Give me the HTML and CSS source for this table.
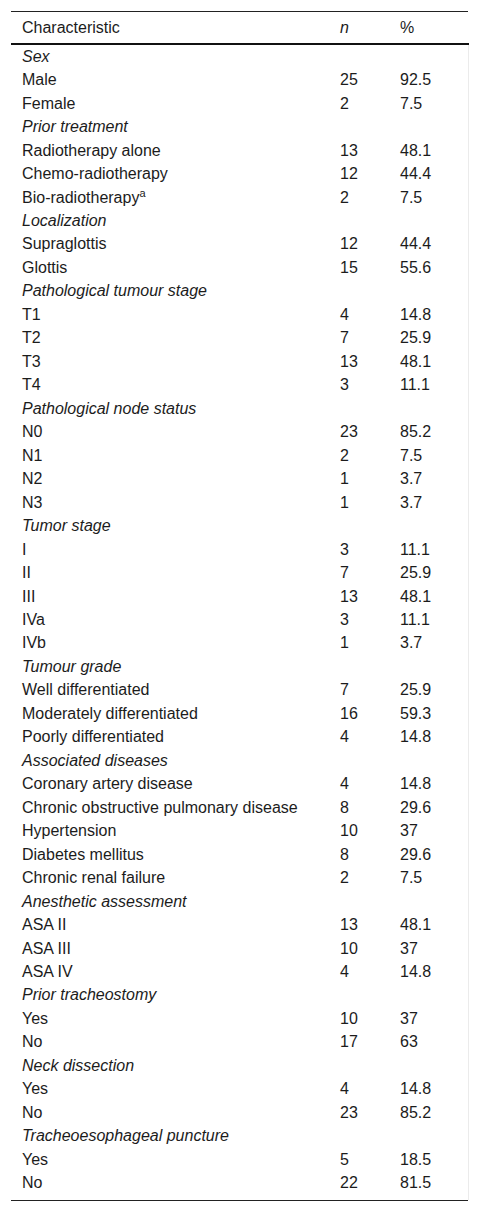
FILE: index.html
```html
<!DOCTYPE html>
<html>
<head>
<meta charset="utf-8">
<link rel="stylesheet" href="styles.css">
</head>
<body>
<div class="card">
<table class="tbl">
<colgroup><col class="c1"><col class="c2"><col class="c3"></colgroup>
<thead>
<tr><th>Characteristic</th><th><i>n</i></th><th>%</th></tr>
</thead>
<tbody>
<tr class="sec"><td colspan="3">Sex</td></tr>
<tr><td>Male</td><td>25</td><td>92.5</td></tr>
<tr><td>Female</td><td>2</td><td>7.5</td></tr>
<tr class="sec"><td colspan="3">Prior treatment</td></tr>
<tr><td>Radiotherapy alone</td><td>13</td><td>48.1</td></tr>
<tr><td>Chemo-radiotherapy</td><td>12</td><td>44.4</td></tr>
<tr><td>Bio-radiotherapy<sup>a</sup></td><td>2</td><td>7.5</td></tr>
<tr class="sec"><td colspan="3">Localization</td></tr>
<tr><td>Supraglottis</td><td>12</td><td>44.4</td></tr>
<tr><td>Glottis</td><td>15</td><td>55.6</td></tr>
<tr class="sec"><td colspan="3">Pathological tumour stage</td></tr>
<tr><td>T1</td><td>4</td><td>14.8</td></tr>
<tr><td>T2</td><td>7</td><td>25.9</td></tr>
<tr><td>T3</td><td>13</td><td>48.1</td></tr>
<tr><td>T4</td><td>3</td><td>11.1</td></tr>
<tr class="sec"><td colspan="3">Pathological node status</td></tr>
<tr><td>N0</td><td>23</td><td>85.2</td></tr>
<tr><td>N1</td><td>2</td><td>7.5</td></tr>
<tr><td>N2</td><td>1</td><td>3.7</td></tr>
<tr><td>N3</td><td>1</td><td>3.7</td></tr>
<tr class="sec"><td colspan="3">Tumor stage</td></tr>
<tr><td>I</td><td>3</td><td>11.1</td></tr>
<tr><td>II</td><td>7</td><td>25.9</td></tr>
<tr><td>III</td><td>13</td><td>48.1</td></tr>
<tr><td>IVa</td><td>3</td><td>11.1</td></tr>
<tr><td>IVb</td><td>1</td><td>3.7</td></tr>
<tr class="sec"><td colspan="3">Tumour grade</td></tr>
<tr><td>Well differentiated</td><td>7</td><td>25.9</td></tr>
<tr><td>Moderately differentiated</td><td>16</td><td>59.3</td></tr>
<tr><td>Poorly differentiated</td><td>4</td><td>14.8</td></tr>
<tr class="sec"><td colspan="3">Associated diseases</td></tr>
<tr><td>Coronary artery disease</td><td>4</td><td>14.8</td></tr>
<tr><td>Chronic obstructive pulmonary disease</td><td>8</td><td>29.6</td></tr>
<tr><td>Hypertension</td><td>10</td><td>37</td></tr>
<tr><td>Diabetes mellitus</td><td>8</td><td>29.6</td></tr>
<tr><td>Chronic renal failure</td><td>2</td><td>7.5</td></tr>
<tr class="sec"><td colspan="3">Anesthetic assessment</td></tr>
<tr><td>ASA II</td><td>13</td><td>48.1</td></tr>
<tr><td>ASA III</td><td>10</td><td>37</td></tr>
<tr><td>ASA IV</td><td>4</td><td>14.8</td></tr>
<tr class="sec"><td colspan="3">Prior tracheostomy</td></tr>
<tr><td>Yes</td><td>10</td><td>37</td></tr>
<tr><td>No</td><td>17</td><td>63</td></tr>
<tr class="sec"><td colspan="3">Neck dissection</td></tr>
<tr><td>Yes</td><td>4</td><td>14.8</td></tr>
<tr><td>No</td><td>23</td><td>85.2</td></tr>
<tr class="sec"><td colspan="3">Tracheoesophageal puncture</td></tr>
<tr><td>Yes</td><td>5</td><td>18.5</td></tr>
<tr><td>No</td><td>22</td><td>81.5</td></tr>
</tbody>
</table>
</div>
</body>
</html>
```
FILE: styles.css
```css
html, body {
  margin: 0;
  padding: 0;
  background: #fff;
}
body {
  font-family: "Liberation Sans", Arial, sans-serif;
  color: #1c1c1c;
  padding: 11px 0 0 11px;
}
.card {
  width: 457px;
  border-top: 1px solid #222;
  border-bottom: 1px solid #222;
}
.tbl {
  width: 457px;
  border-collapse: collapse;
  table-layout: fixed;
  font-size: 16px;
}
.c1 { width: 318px; }
.c2 { width: 60px; }
.c3 { width: 79px; }
.tbl th {
  font-weight: normal;
  text-align: left;
  height: 31px;
  padding: 0 11px;
  border-bottom: 2px solid #111;
  vertical-align: middle;
}
.tbl td {
  height: 23.48px;
  padding: 0 11px;
  line-height: 16px;
  vertical-align: middle;
  white-space: nowrap;
}
.tbl td:last-child {
  border-right: 1px solid #ebebeb;
}
.tbl tbody tr:last-child td {
  height: 0;
  padding-top: 3.74px;
  padding-bottom: 8.74px;
  vertical-align: top;
}
.sec td {
  font-style: italic;
}
.tbl sup {
  font-size: 11px;
  line-height: 0;
  vertical-align: 6px;
}
```
